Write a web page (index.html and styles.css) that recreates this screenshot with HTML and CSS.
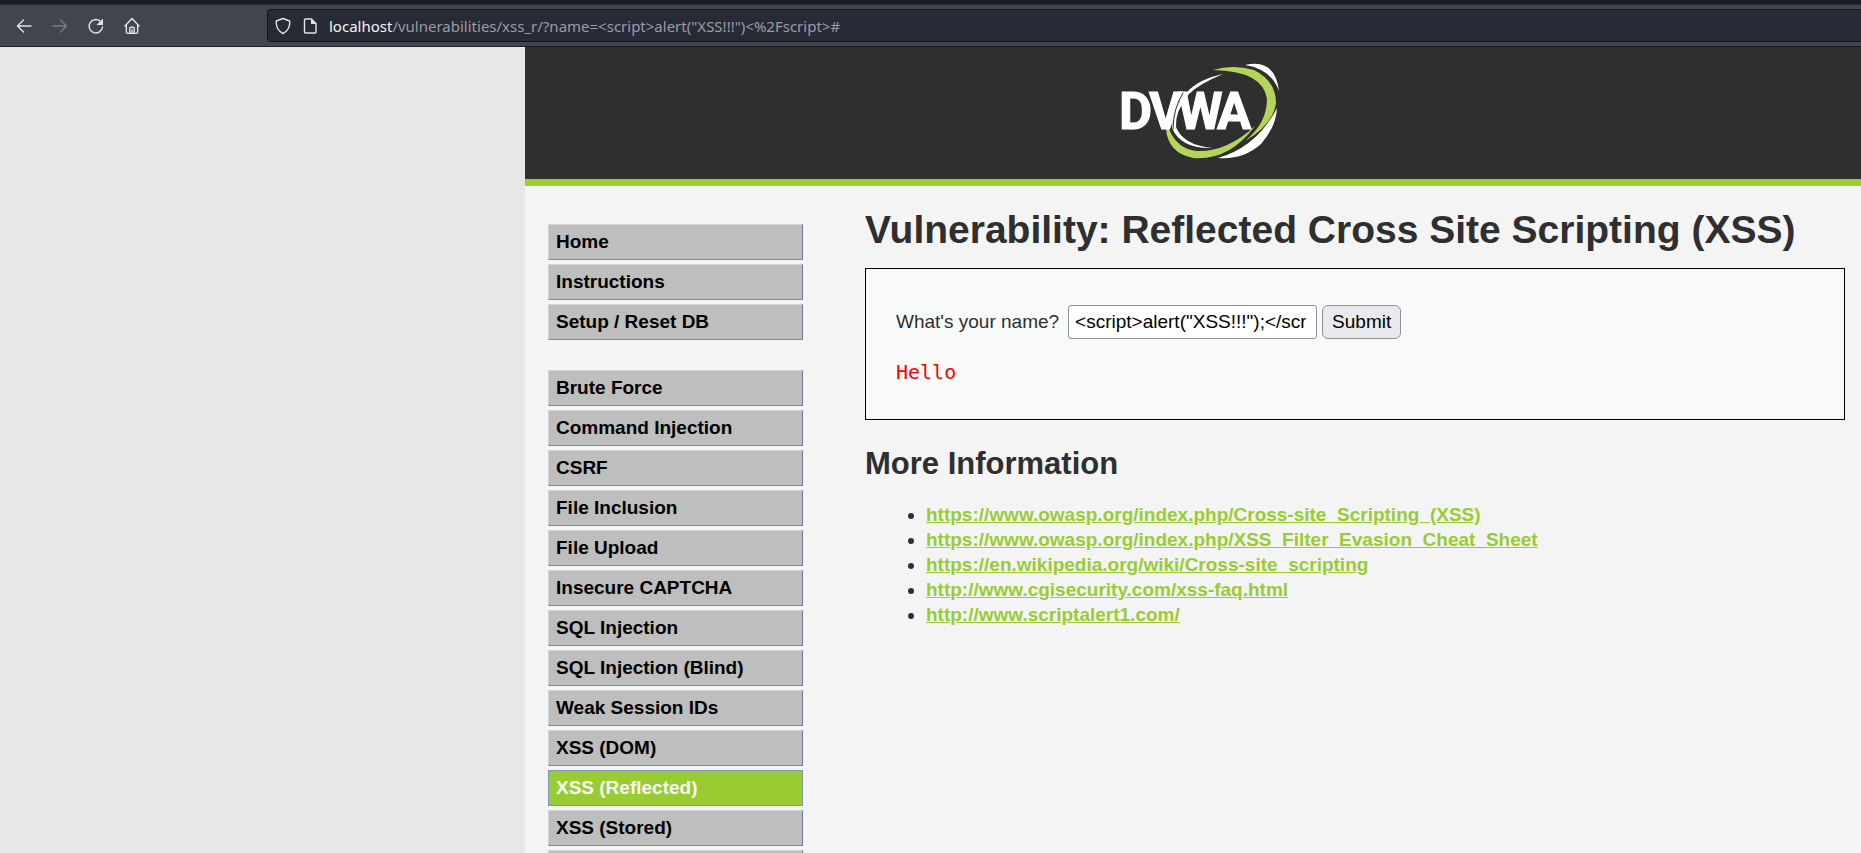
FILE: index.html
```
<!DOCTYPE html>
<html lang="en">
<head>
<meta charset="utf-8">
<title>Vulnerability: Reflected Cross Site Scripting (XSS)</title>
<link rel="stylesheet" href="styles.css">
</head>
<body>
<div class="browser">
  <div class="tabstrip"></div>
  <div class="toolbar">
    <div class="nav">
      <button class="nav-btn" aria-label="Back"><svg viewBox="0 0 16 18"><path d="M15 9H1.500M7.500 3 1.500 9l6 6"/></svg></button>
      <button class="nav-btn dim" aria-label="Forward" disabled><svg viewBox="0 0 16 18"><path d="M1 9h13.500M8.500 3l6 6-6 6"/></svg></button>
      <button class="nav-btn" aria-label="Reload"><svg viewBox="0 0 16 18"><path d="M12 4A6.700 6.700 0 1 0 14.500 10"/><path class="solid" d="M15 1.500v6.500H8.500z"/></svg></button>
      <button class="nav-btn" aria-label="Home"><svg viewBox="0 0 16 18"><path d="M1 9 8 1.500 15 9M2.300 8v7q0 1.400 1.400 1.400h8.600q1.400 0 1.400-1.400V8M5.800 16v-4.500q0-1.200 1.200-1.200h2q1.200 0 1.200 1.200V16M8 13v3"/></svg></button>
    </div>
    <div class="urlbar">
      <svg class="url-icon" viewBox="0 0 16 18"><path d="M8 1.500 14.700 4q.8 8.500-6.700 12.700Q.5 12.500 1.300 4z"/></svg>
      <svg class="url-icon" viewBox="0 0 16 18"><path d="M3.500 2H9.500L14 6.500V15q0 1-1 1H3.500q-1 0-1-1V3q0-1 1-1z"/><path class="solid" d="M9 2v5h5z"/></svg>
      <span class="url"><span class="host">localhost</span>/vulnerabilities/xss_r/?name=&lt;script&gt;alert("XSS!!!")&lt;%2Fscript&gt;#</span>
    </div>
  </div>
</div>
<div class="page">
  <div class="container">
    <header class="header">
      <svg class="logo" viewBox="0 0 158 96" role="img" aria-label="DVWA">
        <path class="w" d="M102 11Q78 21 68 31Q54 48 55 64Q62 82 91 85Q60 86 51 65Q51 46 66 29Q78 16 102 11z"/>
        <path class="g" d="M92 7Q112 1 133 7Q155 18 155 40Q152 62 124 78Q146 60 146 36Q142 8 92 7z"/>
        <path class="g" d="M45 66Q47 90 72 95Q108 98 134 63Q106 89 76 88Q56 86 48 66z"/>
        <path class="w" d="M124 2Q154-5 158 28Q150 6 124 2z"/>
        <path class="w" d="M156 45Q155 64 140 81Q122 97 97 95Q136 84 156 45z"/>
        <text class="logo-text" x="-2 28 57 96" y="66">DVWA</text>
        <path class="cut" d="M62 30Q52 46 52 66"/>
      </svg>
    </header>
    <div class="body">
      <nav class="menu">
        <ul>
          <li><a href="#">Home</a></li>
          <li><a href="#">Instructions</a></li>
          <li><a href="#">Setup / Reset DB</a></li>
        </ul>
        <ul>
          <li><a href="#">Brute Force</a></li>
          <li><a href="#">Command Injection</a></li>
          <li><a href="#">CSRF</a></li>
          <li><a href="#">File Inclusion</a></li>
          <li><a href="#">File Upload</a></li>
          <li><a href="#">Insecure CAPTCHA</a></li>
          <li><a href="#">SQL Injection</a></li>
          <li><a href="#">SQL Injection (Blind)</a></li>
          <li><a href="#">Weak Session IDs</a></li>
          <li><a href="#">XSS (DOM)</a></li>
          <li><a href="#" class="selected">XSS (Reflected)</a></li>
          <li><a href="#">XSS (Stored)</a></li>
          <li><a href="#" aria-label="More"></a></li>
        </ul>
      </nav>
      <main class="main">
        <h1>Vulnerability: Reflected Cross Site Scripting (XSS)</h1>
        <div class="panel">
          <form class="form">
            <label for="name">What's your name?</label>
            <input id="name" type="text" value="&lt;script&gt;alert(&quot;XSS!!!&quot;);&lt;/script&gt;">
            <button type="button">Submit</button>
          </form>
          <pre>Hello</pre>
        </div>
        <h2>More Information</h2>
        <ul class="links">
          <li><a href="#">https://www.owasp.org/index.php/Cross-site_Scripting_(XSS)</a></li>
          <li><a href="#">https://www.owasp.org/index.php/XSS_Filter_Evasion_Cheat_Sheet</a></li>
          <li><a href="#">https://en.wikipedia.org/wiki/Cross-site_scripting</a></li>
          <li><a href="#">http://www.cgisecurity.com/xss-faq.html</a></li>
          <li><a href="#">http://www.scriptalert1.com/</a></li>
        </ul>
      </main>
    </div>
  </div>
</div>
</body>
</html>
```
FILE: styles.css
```
* { box-sizing: border-box; }
body {
  margin: 0;
  height: 100vh;
  overflow: hidden;
  display: flex;
  flex-direction: column;
  background: #e7e7e7;
  font-family: "Liberation Sans", Arial, sans-serif;
  font-size: 19px;
  color: #2f2f2f;
}
.browser { flex: none; }
.tabstrip { height: 5px; background: #1a1b22; border-bottom: 1px solid #2b2c33; }
.toolbar {
  display: flex;
  height: 42px;
  padding: 4px 0;
  background: #43454d;
  border-bottom: 1px solid #202127;
}
.nav { display: flex; align-items: center; gap: 20px; width: 267px; padding-left: 16px; }
.nav-btn { width: 16px; height: 18px; padding: 0; border: 0; background: none; color: #e4e4e4; }
.nav-btn svg { display: block; }
.nav-btn.dim { color: #7b7c82; }
svg path { fill: none; stroke: currentColor; stroke-width: 1.4; stroke-linecap: round; stroke-linejoin: round; }
svg .solid { fill: currentColor; stroke: none; }
.urlbar {
  flex: 1;
  display: flex;
  align-items: center;
  padding-left: 7px;
  background: #282a36;
  border: 1px solid #15161c;
  border-right: 0;
  border-radius: 4px 0 0 4px;
  color: #e4e4e4;
}
.url-icon { width: 16px; height: 18px; margin-right: 11px; }
.url { font-family: "Noto Sans", sans-serif; font-size: 15px; color: #9b9ca3; white-space: nowrap; }
.host { color: #f4f4f4; }

.page { flex: 1; min-height: 0; padding-left: 525px; overflow: hidden; }
.container { min-height: 100%; background: #f4f4f4; }
.header {
  display: flex;
  justify-content: center;
  padding: 16px 0 20px 14px;
  background: #2f2f2f;
  border-bottom: 7px solid #a0cc34;
}
.logo { width: 158px; height: 96px; overflow: visible; }
.logo .w { fill: #fff; stroke: none; }
.logo .g { fill: #b3d659; stroke: none; }
.logo .cut { stroke: #2f2f2f; stroke-width: 1; }
.logo-text { font-family: Roboto, sans-serif; font-weight: 700; font-size: 51px; fill: #fff; stroke: #fff; stroke-width: 1; }

.body { display: flex; padding: 38px 16px 0 23px; }
.menu { flex: none; width: 255px; margin-right: 62px; }
.menu ul { list-style: none; margin: 0 0 30px; padding: 0; display: grid; gap: 4px; }
.menu a {
  display: block;
  height: 36px;
  padding-left: 7px;
  line-height: 34px;
  font-weight: 700;
  color: #000;
  text-decoration: none;
  background: #bebebe;
  border: 1px solid;
  border-color: #d4d4d4 #6f7b93 #7f899c #d4d4d4;
}
.menu .selected { background: #9c3; color: #f8faf0; border-color: #7f93b2; }

.main { flex: 1; min-width: 0; margin-top: -17px; }
h1 { margin: 0 0 15px; font-size: 39px; line-height: 46px; white-space: nowrap; }
.panel { height: 152px; padding: 36px 30px; border: 1px solid #000; background: #f8faf9; }
.form { display: flex; align-items: center; gap: 5px; }
.form label { flex: none; margin-right: 4px; }
.form input {
  width: 249px;
  height: 34px;
  padding: 0 10px 0 6px;
  border: 1px solid #8f8f9d;
  border-radius: 3px;
  background: #fff;
  color: #000;
  font: inherit;
}
.form button {
  height: 34px;
  padding: 0 9px;
  border: 1px solid #8f8f9d;
  border-radius: 6px;
  background: #e9e9ed;
  color: #000;
  font: inherit;
}
pre { margin: 22px 0 0; font-family: "DejaVu Sans Mono", monospace; font-size: 20px; line-height: 22px; color: #f00; }
h2 { margin: 26px 0 20px; font-size: 31px; line-height: 36px; }
.links { margin: 0; padding-left: 61px; line-height: 25px; }
.links a { color: #9c3; font-weight: 700; }
```
